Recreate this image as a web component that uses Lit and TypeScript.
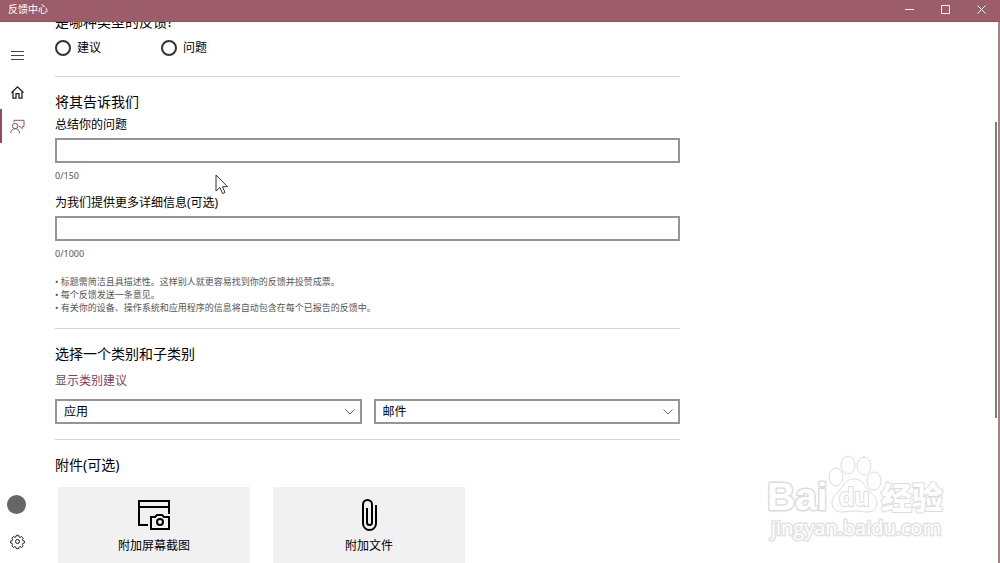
import { LitElement, html, css, svg } from "lit";
import { customElement, property, state } from "lit/decorators.js";
import { classMap } from "lit/directives/class-map.js";

const icons = {
  menu: svg`<path d="M2 4.500h13M2 8.500h13M2 12.500h13" stroke="#444"/>`,
  home: svg`<path d="M2.500 8.700 8.500 2.800l6 5.900M4 7.600v6.600h3V9.700h3v4.500h3V7.600" stroke-width="1.300"/>`,
  feedback: svg`<circle cx="6.200" cy="8" r="2.700"/><path d="M1.600 15.200c.3-2.800 2-4.500 4.600-4.500s4.100 1.700 4.400 4.500M5 4.200V2.300h10v6.200h-1.700v2.200L11 8.500h-1"/>`,
  gear: svg`<circle cx="8.500" cy="8.500" r="2"/><path d="M7.300 2.300h2.400l.4 1.700 1 .4 1.500-.9 1.600 1.700-.9 1.400.5 1.100 1.600.3v1.900l-1.600.5-.5 1 .9 1.500-1.600 1.600-1.500-.9-1 .5-.4 1.600H7.300l-.4-1.600-1-.5-1.500.9-1.600-1.600.9-1.500-.5-1-1.600-.5V8l1.600-.3.5-1.100-.9-1.400 1.600-1.700 1.500.9 1-.4z"/>`,
};

const categories = ["应用", "设备和驱动程序", "桌面环境"];
const subcategories = ["邮件", "日历", "照片"];
const notes = [
  "标题需简洁且具描述性。这样别人就更容易找到你的反馈并投赞成票。",
  "每个反馈发送一条意见。",
  "有关你的设备、操作系统和应用程序的信息将自动包含在每个已报告的反馈中。",
];

@customElement("title-bar")
class TitleBar extends LitElement {
  static styles = css`
    :host {
      display: flex;
      align-items: stretch;
      justify-content: space-between;
      height: 22px;
      padding: 0 1px 0 8px;
      box-sizing: border-box;
      background: #9d5c69;
      border-bottom: 1px solid #925360;
      color: #fff;
      position: relative;
      z-index: 1;
    }
    .title {
      font-size: 10px;
      line-height: 18px;
    }
    .controls {
      display: flex;
    }
    button {
      width: 36px;
      border: 0;
      padding: 0 0 2px;
      background: none;
      color: inherit;
      display: grid;
      place-items: center;
    }
    svg {
      fill: none;
      stroke: currentColor;
      stroke-width: 1;
      display: block;
    }
  `;
  render() {
    return html`
      <span class="title">反馈中心</span>
      <div class="controls">
        <button aria-label="最小化"><svg width="9" height="9"><path d="M0 4.500h9" /></svg></button>
        <button aria-label="最大化"><svg width="9" height="9"><path d="M.5.500h8v8h-8z" /></svg></button>
        <button aria-label="关闭"><svg width="9" height="9"><path d="M.5.500l8 8M8.500.500l-8 8" /></svg></button>
      </div>
    `;
  }
}

@customElement("side-nav")
class SideNav extends LitElement {
  static styles = css`
    :host {
      display: block;
    }
    nav {
      display: flex;
      flex-direction: column;
      box-sizing: border-box;
      height: 100%;
      padding: 16px 0 5px;
    }
    button {
      display: grid;
      place-items: center;
      width: 35px;
      height: 34px;
      flex: none;
      border: 0;
      padding: 0;
      background: none;
      color: #222;
      box-sizing: border-box;
    }
    .menu {
      margin-bottom: 3px;
    }
    .current {
      color: #8d5763;
      box-shadow: inset 2px 0 #8d4f5f;
    }
    .account {
      margin-top: auto;
      margin-bottom: 3px;
    }
    .avatar {
      width: 19px;
      height: 19px;
      margin-right: 2px;
      border-radius: 50%;
      background: #666;
    }
    svg {
      display: block;
      fill: none;
      stroke: currentColor;
      stroke-width: 1;
    }
  `;
  private item(name: string, label: string, shape: unknown) {
    return html`<button class=${classMap({ [name]: true, current: name === "feedback" })} aria-label=${label}>
      <svg width="17" height="17" viewBox="0 0 17 17">${shape}</svg>
    </button>`;
  }
  render() {
    return html`<nav>
      ${this.item("menu", "菜单", icons.menu)}
      ${this.item("home", "主页", icons.home)}
      ${this.item("feedback", "反馈", icons.feedback)}
      <button class="account" aria-label="帐户"><span class="avatar"></span></button>
      ${this.item("settings", "设置", icons.gear)}
    </nav>`;
  }
}

@customElement("feedback-form")
class FeedbackForm extends LitElement {
  @state() private summary = "";
  @state() private details = "";

  static styles = css`
    :host {
      display: block;
    }
    form {
      max-width: 625px;
      margin-top: -10px;
    }
    section {
      padding: 15px 0;
      border-bottom: 1px solid #d4d4d4;
    }
    section:first-child {
      padding: 0 0 20px;
    }
    section:last-child {
      border-bottom: 0;
      padding-bottom: 0;
    }
    h2 {
      margin: 0;
      font-size: 14px;
      line-height: 20px;
      font-weight: 400;
    }
    .types {
      display: flex;
      gap: 8px;
      margin-top: 8px;
    }
    .types label {
      display: flex;
      align-items: center;
      gap: 6px;
      width: 98px;
      font-size: 12px;
      line-height: 16px;
    }
    .types input {
      appearance: none;
      width: 16px;
      height: 16px;
      margin: 0;
      box-sizing: border-box;
      border: 2px solid #333;
      border-radius: 50%;
    }
    .types input:checked {
      background: radial-gradient(#333 3px, transparent 4px);
    }
    .field {
      display: block;
      font-size: 12px;
      line-height: 16px;
      margin: 13px 0 5px;
    }
    h2 + .field {
      margin-top: 5px;
    }
    .text,
    select {
      display: block;
      width: 100%;
      height: 25px;
      box-sizing: border-box;
      border: 2px solid #959595;
      border-radius: 0;
      background: #fff;
      color: #000;
      padding: 0 7px;
      margin: 0;
      font: inherit;
      font-size: 12px;
      outline: none;
    }
    select {
      appearance: none;
    }
    .count {
      display: block;
      margin-top: 7px;
      font-size: 9px;
      line-height: 12px;
      color: #555;
    }
    ul {
      list-style: none;
      margin: 15px 0 0;
      padding: 0;
      font-size: 9px;
      line-height: 13px;
      color: #555;
    }
    li::before {
      content: "• ";
    }
    .notes {
      padding-bottom: 14px;
    }
    a {
      display: inline-block;
      margin: 9px 0 10px;
      font-size: 12px;
      line-height: 16px;
      color: #7c4654;
      text-decoration: none;
      vertical-align: top;
    }
    .pickers {
      display: grid;
      grid-template-columns: 1fr 1fr;
      gap: 12px;
    }
    .picker {
      display: grid;
      align-items: center;
    }
    .picker > * {
      grid-area: 1 / 1;
    }
    .picker svg {
      justify-self: end;
      margin-right: 7px;
      pointer-events: none;
      fill: none;
      stroke: #666;
    }
    .tiles {
      display: flex;
      gap: 23px;
      margin: 12px 3px 0;
    }
    .tile {
      display: flex;
      flex-direction: column;
      align-items: center;
      gap: 7px;
      width: 192px;
      padding: 12px 0;
      border: 0;
      background: #f1f1f1;
      color: #000;
      font: inherit;
      font-size: 12px;
      line-height: 16px;
    }
    .tile svg {
      fill: none;
      stroke: #000;
      stroke-width: 2;
    }
  `;

  private picker(label: string, options: string[]) {
    return html`<div class="picker">
      <select aria-label=${label}>
        ${options.map((o) => html`<option>${o}</option>`)}
      </select>
      <svg width="10" height="6"><path d="M.5.500 5 5 9.500.500" /></svg>
    </div>`;
  }

  render() {
    return html`<form>
      <section>
        <h2>是哪种类型的反馈?</h2>
        <div class="types">
          <label><input type="radio" name="type" />建议</label>
          <label><input type="radio" name="type" />问题</label>
        </div>
      </section>
      <section class="notes">
        <h2>将其告诉我们</h2>
        <label class="field" for="summary">总结你的问题</label>
        <input class="text" id="summary" maxlength="150"
          @input=${(e: Event) => (this.summary = (e.target as HTMLInputElement).value)} />
        <span class="count">${this.summary.length}/150</span>
        <label class="field" for="details">为我们提供更多详细信息(可选)</label>
        <input class="text" id="details" maxlength="1000"
          @input=${(e: Event) => (this.details = (e.target as HTMLInputElement).value)} />
        <span class="count">${this.details.length}/1000</span>
        <ul>
          ${notes.map((n) => html`<li>${n}</li>`)}
        </ul>
      </section>
      <section>
        <h2>选择一个类别和子类别</h2>
        <a href="#">显示类别建议</a>
        <div class="pickers">
          ${this.picker("类别", categories)} ${this.picker("子类别", subcategories)}
        </div>
      </section>
      <section>
        <h2>附件(可选)</h2>
        <div class="tiles">
          <button type="button" class="tile">
            <svg width="32" height="32" viewBox="0 0 32 32">
              <path d="M10 26H1V2h30v13M1 8h30" />
              <path d="M13 18h4l2-2h5l2 2h5v12H13z" />
              <circle cx="22" cy="23" r="3" />
            </svg>
            附加屏幕截图
          </button>
          <button type="button" class="tile">
            <svg width="32" height="32" viewBox="0 0 32 32">
              <path d="M19 23.500V5.500a4.500 4.500 0 0 0-9 0V24.500a6.500 6.500 0 0 0 13 0V6M19 23.500a2.500 2.500 0 0 1-5 0V9" />
            </svg>
            附加文件
          </button>
        </div>
      </section>
    </form>`;
  }
}

@customElement("scroll-rail")
class ScrollRail extends LitElement {
  @property({ type: Number }) start = 0;
  @property({ type: Number }) size = 1;

  static styles = css`
    :host {
      display: flex;
      flex-direction: column;
      width: 2px;
      margin-right: 1px;
    }
    .thumb {
      background: #7b8080;
    }
  `;
  render() {
    return html`
      <div style="height:${this.start * 100}%"></div>
      <div class="thumb" style="height:${this.size * 100}%"></div>
    `;
  }
}

@customElement("site-watermark")
class SiteWatermark extends LitElement {
  static styles = css`
    :host {
      display: block;
    }
    svg {
      display: block;
      fill: #fff;
      stroke: #dcdcdc;
      stroke-width: 1;
      stroke-linejoin: round;
    }
    text {
      paint-order: stroke;
      stroke-width: 3;
    }
    .latin {
      font-family: "Liberation Sans", sans-serif;
    }
    .bold {
      font-weight: 700;
    }
    .brand {
      font-size: 39px;
    }
    .pad {
      font-size: 25px;
      stroke-width: 2;
    }
    .han {
      font-family: "Noto Sans CJK SC", sans-serif;
      font-weight: 900;
      font-size: 31px;
      stroke-width: 2;
    }
    .site {
      font-family: "Open Sans", sans-serif;
      font-size: 20px;
      stroke: #e2e2e2;
    }
  `;
  render() {
    return html`<svg width="184" height="90" viewBox="0 0 184 90" aria-hidden="true">
      <text class="latin bold brand" x="1" y="55">Bai</text>
      <ellipse cx="70" cy="22" rx="7" ry="9" />
      <ellipse cx="82" cy="10" rx="7" ry="9" />
      <ellipse cx="98" cy="11" rx="7" ry="9" />
      <ellipse cx="108" cy="26" rx="7" ry="9" />
      <path d="M88 24c-5 0-9 3-11 7-3 5-11 9-11 17 0 5 4 9 9 9 4 0 8-1 13-1s9 1 13 1c6 0 10-4 10-9 0-8-9-12-12-17-2-4-6-7-11-7z" />
      <text class="latin bold pad" x="73" y="51">du</text>
      <text class="han" x="115" y="54">经验</text>
      <text class="site" x="5" y="80">jingyan.baidu.com</text>
    </svg>`;
  }
}

@customElement("app-root")
class AppRoot extends LitElement {
  static styles = css`
    :host {
      display: flex;
      flex-direction: column;
      position: relative;
      height: 100vh;
      overflow: hidden;
      background: #fff;
      color: #000;
      font-family: "Noto Sans", "Noto Sans CJK SC", sans-serif;
    }
    .body {
      display: grid;
      grid-template-columns: 35px minmax(0, 1fr) auto;
      flex: 1;
      min-height: 0;
      border-right: 2px solid #a98289;
    }
    main {
      min-height: 0;
      overflow: hidden;
      padding: 0 20px;
    }
    .watermark {
      position: absolute;
      right: 50px;
      bottom: 18px;
      pointer-events: none;
    }
    .pointer {
      position: absolute;
      left: 215px;
      top: 174px;
      pointer-events: none;
      fill: #fff;
      stroke: #333;
    }
  `;
  render() {
    return html`
      <title-bar></title-bar>
      <div class="body">
        <side-nav></side-nav>
        <main><feedback-form></feedback-form></main>
        <scroll-rail .start=${0.185} .size=${0.547}></scroll-rail>
      </div>
      <site-watermark class="watermark"></site-watermark>
      <svg class="pointer" width="14" height="21" viewBox="0 0 14 21">
        <path d="M1 1v16l4-3.500 2.500 6 2.500-1-2.500-5.800h5z" />
      </svg>
    `;
  }
}
